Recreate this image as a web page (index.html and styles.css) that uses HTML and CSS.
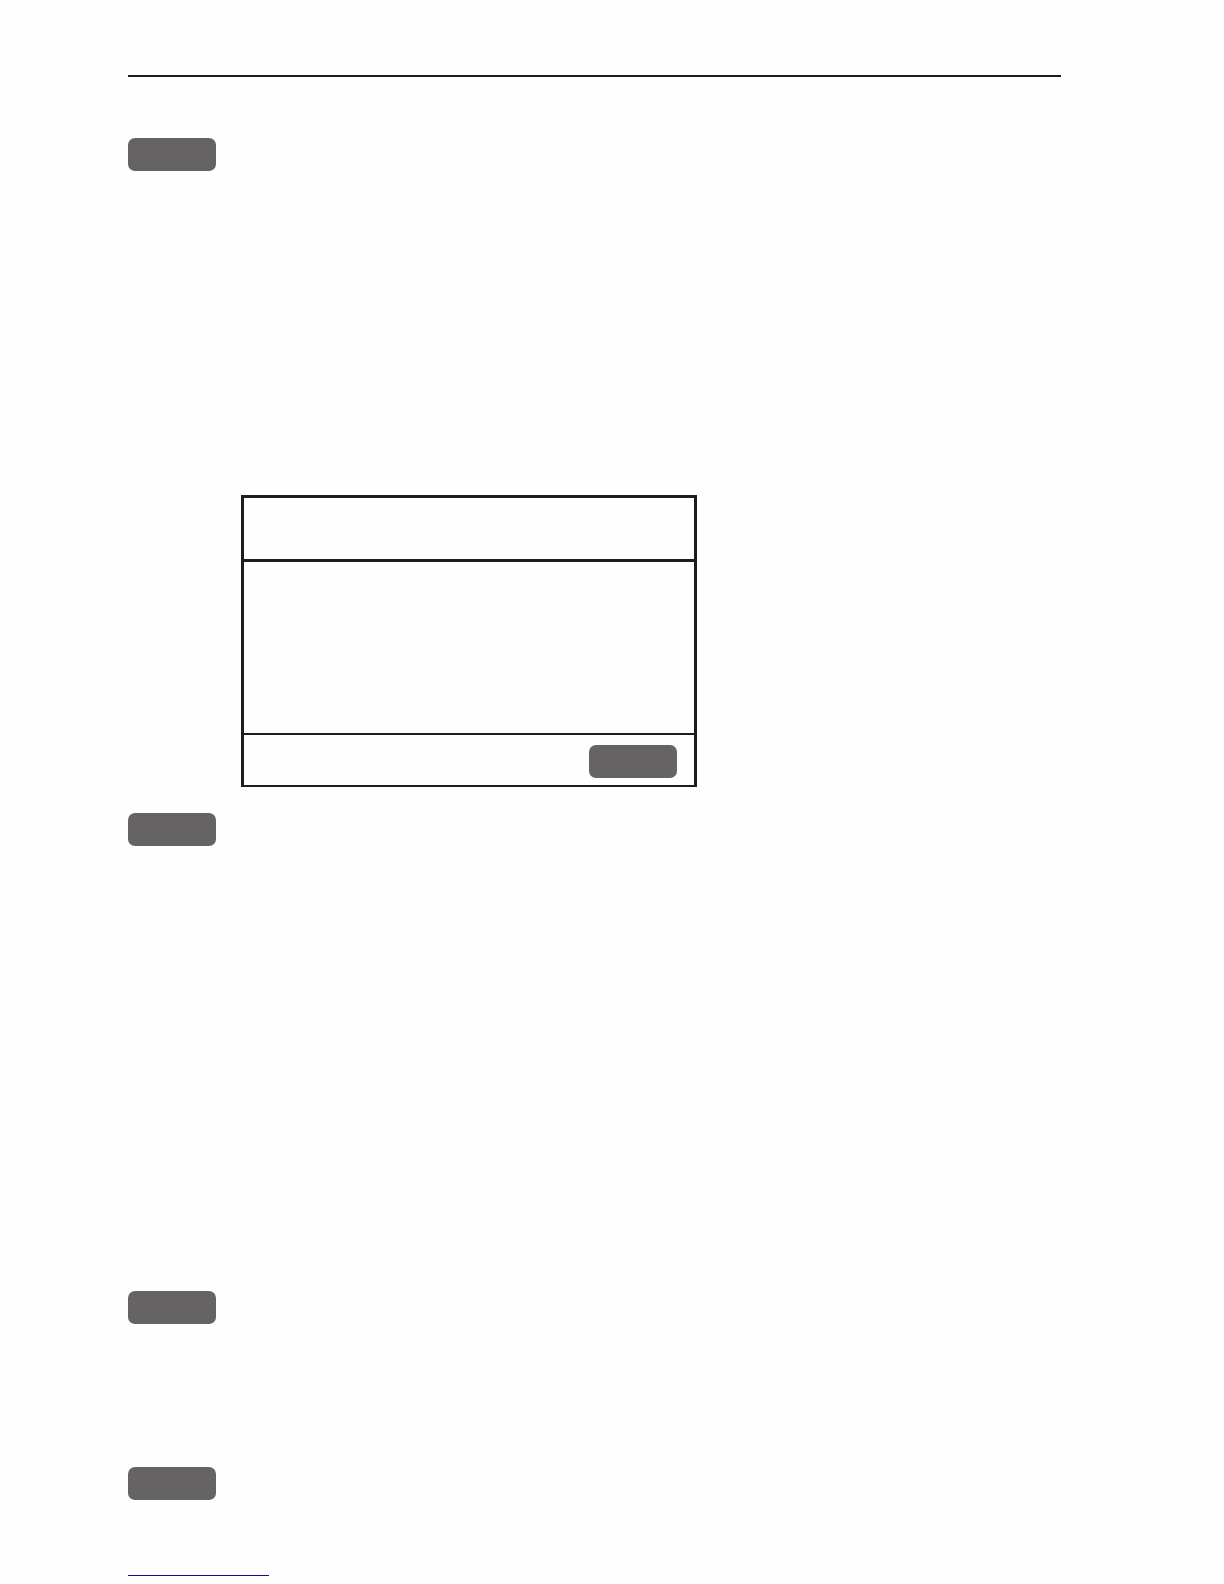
FILE: index.html
```html
<!DOCTYPE html>
<html lang="en">

<head>
    <meta charset="UTF-8">
    <meta name="viewport" content="width=device-width, initial-scale=1.0">
    <title>Manual page</title>
    <link rel="stylesheet" href="styles.css">
</head>

<body>
    <main class="page">
        <section class="step step-display">
            <button class="key" type="button" aria-label="Key"></button>
            <div class="display">
                <div class="display-title"></div>
                <div class="display-body"></div>
                <div class="display-footer">
                    <button class="key" type="button" aria-label="Key"></button>
                </div>
            </div>
        </section>

        <section class="step step-long">
            <button class="key" type="button" aria-label="Key"></button>
        </section>

        <section class="step step-short">
            <button class="key" type="button" aria-label="Key"></button>
        </section>

        <section class="step step-last">
            <button class="key" type="button" aria-label="Key"></button>
        </section>

        <a class="page-link" href="#" aria-label="Link"></a>
    </main>
</body>

</html>
```

FILE: styles.css
```css
* {
    box-sizing: border-box;
}

body {
    margin: 0;
    background: #fefefe;
    font-family: "Liberation Sans", Arial, sans-serif;
}

.page {
    margin: 75px 163px 8px 128px;
    padding-top: 61px;
    border-top: 2px solid #1e1c1d;
}

/* key column on the left, content on the right */
.step {
    display: grid;
    grid-template-columns: 113px 1fr;
    align-items: start;
}

.step-display {
    padding-bottom: 26px;
}

.step-long {
    min-height: 478px;
}

.step-short {
    min-height: 176px;
}

.step-last {
    min-height: 108px;
}

.key {
    width: 88px;
    height: 33px;
    padding: 0;
    border: none;
    border-radius: 7px;
    background: #656364;
}

/* device display */
.display {
    max-width: 456px;
    margin-top: 357px;
    border: 3px solid #1e1c1d;
    border-bottom-width: 2px;
}

.display-title {
    height: 64px;
    border-bottom: 3px solid #1e1c1d;
}

.display-body {
    height: 173px;
    border-bottom: 2px solid #1e1c1d;
}

.display-footer {
    display: flex;
    align-items: flex-end;
    justify-content: flex-end;
    height: 50px;
    padding: 0 17px 7px 0;
}

.page-link {
    display: block;
    width: 141px;
    border-bottom: 1px solid #0c0c98;
}
```
